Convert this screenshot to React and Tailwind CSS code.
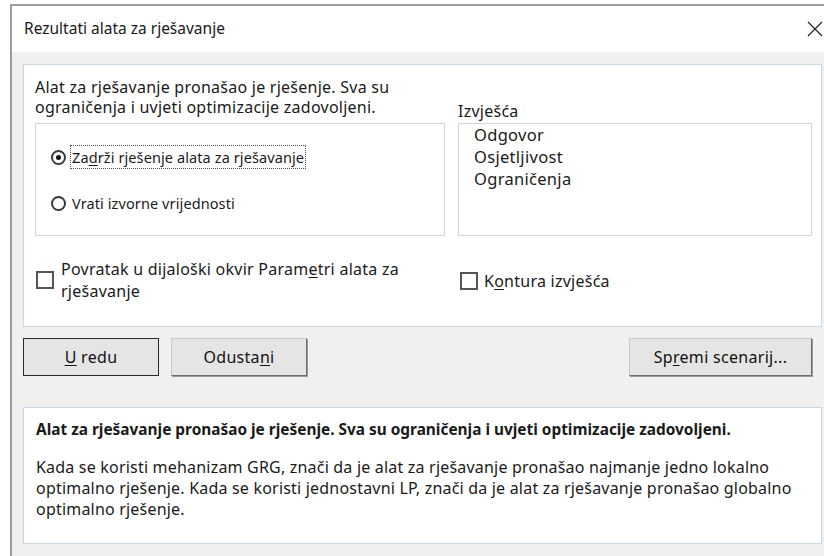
import React, { useState } from "react";

const font = { fontFamily: '"Noto Sans", "Open Sans", sans-serif' };

function Key({ children }) {
  return <span className="underline underline-offset-2 decoration-1">{children}</span>;
}

function Radio({ checked, onClick, children, focused }) {
  return (
    <div className="flex items-center h-[24px] cursor-default" onClick={onClick}>
      <span className="w-[15px] h-[15px] rounded-full border-2 border-[#3a3a3a] bg-white flex items-center justify-center">
        {checked && <span className="w-[5px] h-[5px] rounded-full bg-[#111]" />}
      </span>
      <span
        className={`ml-[5px] px-[1px] text-[14.5px] tracking-[0.1px] leading-[22px] ${
          focused ? "outline outline-1 outline-dotted outline-[#555]" : ""
        }`}
      >
        {children}
      </span>
    </div>
  );
}

function Check({ checked, onClick }) {
  return (
    <span
      onClick={onClick}
      className="w-[18px] h-[18px] shrink-0 border-2 border-[#555] bg-white flex items-center justify-center"
    >
      {checked && <span className="text-[12px] leading-none">✓</span>}
    </span>
  );
}

function Button({ children, primary, className = "" }) {
  return (
    <button
      className={`h-[38px] text-[16px] tracking-[0.3px] text-[#111] bg-[#e5e5e5] ${
        primary
          ? "border-[1.5px] border-[#2a2a2a]"
          : "border border-[#c8c8c8] border-r-[#6e6e6e] border-b-[#6e6e6e] shadow-[1px_1px_0_#9a9a9a]"
      } ${className}`}
    >
      {children}
    </button>
  );
}

export default function App() {
  const [keep, setKeep] = useState(true);
  const [back, setBack] = useState(false);
  const [outline, setOutline] = useState(false);

  return (
    <div className="w-[824px] h-[556px] bg-white overflow-hidden" style={font}>
      <div className="ml-[10px] mt-[4px] h-[560px] border-l-2 border-t-2 border-[#9c9c9c] flex flex-col text-[#1a1a1a]">
        {/* title bar */}
        <div className="h-[46px] bg-white flex items-center justify-between pl-[12px] pr-[1px]">
          <span className="text-[15.5px]">Rezultati alata za rješavanje</span>
          <svg width="16" height="16" viewBox="0 0 16 16">
            <path d="M1 1L15 15M15 1L1 15" stroke="#222" strokeWidth="1.2" fill="none" />
          </svg>
        </div>

        {/* dialog body */}
        <div className="flex-1 bg-[#f0f0f0] pl-[11px] pt-[12px]">
          <div className="w-[799px] h-[263px] bg-white border border-[#cdd7e1] pl-[11px] pt-[12px]">
            <div className="grid grid-cols-[410px_354px] gap-x-[13px] items-end">
              <p className="text-[16px] tracking-[0.25px] leading-[20px] mb-[6px] whitespace-nowrap">
                Alat za rješavanje pronašao je rješenje. Sva su
                <br />
                ograničenja i uvjeti optimizacije zadovoljeni.
              </p>
              <p className="text-[16px] tracking-[0.25px] leading-[20px] mb-[2px]">Izvješća</p>

              <div className="h-[113px] border border-[#cdd7e1] pl-[15px] pt-[21px]">
                <Radio checked={keep} focused onClick={() => setKeep(true)}>
                  Za<Key>d</Key>rži rješenje alata za rješavanje
                </Radio>
                <div className="mt-[22px]">
                  <Radio checked={!keep} onClick={() => setKeep(false)}>
                    Vrati izvorne vri<Key>j</Key>ednosti
                  </Radio>
                </div>
              </div>
              <div className="h-[113px] border border-[#cdd7e1] pl-[15px] text-[16.5px] tracking-[0.3px] leading-[22px]">
                <div>Odgovor</div>
                <div>Osjetljivost</div>
                <div>Ograničenja</div>
              </div>
            </div>

            <div className="grid grid-cols-[410px_354px] gap-x-[13px] mt-[22px]">
              <div className="flex items-center pl-[1px]" onClick={() => setBack(!back)}>
                <Check checked={back} />
                <span className="ml-[7px] text-[16px] tracking-[0.25px] leading-[22px] whitespace-nowrap">
                  Povratak u dijaloški okvir Param<Key>e</Key>tri alata za
                  <br />
                  rješavanje
                </span>
              </div>
              <div className="flex items-center pl-[2px] pt-[2px]" onClick={() => setOutline(!outline)}>
                <Check checked={outline} />
                <span className="ml-[6px] text-[16px] tracking-[0.25px]">
                  K<Key>o</Key>ntura izvješća
                </span>
              </div>
            </div>
          </div>

          {/* action buttons */}
          <div className="flex w-[789px] mt-[11px]">
            <Button primary className="w-[136px]">
              <Key>U</Key> redu
            </Button>
            <Button className="w-[136px] ml-[12px]">
              Odusta<Key>n</Key>i
            </Button>
            <Button className="w-[183px] ml-auto">
              Sp<Key>r</Key>emi scenarij...
            </Button>
          </div>

          {/* message box */}
          <div className="w-[799px] h-[137px] mt-[31px] bg-white border border-[#cdd7e1] pl-[12px] pt-[12px] whitespace-nowrap">
            <p className="font-bold text-[15.4px] leading-[20px]">
              Alat za rješavanje pronašao je rješenje. Sva su ograničenja i uvjeti optimizacije zadovoljeni.
            </p>
            <p className="mt-[17px] text-[16px] tracking-[0.2px] leading-[21px]">
              Kada se koristi mehanizam GRG, znači da je alat za rješavanje pronašao najmanje jedno lokalno
              <br />
              optimalno rješenje. Kada se koristi jednostavni LP, znači da je alat za rješavanje pronašao globalno
              <br />
              optimalno rješenje.
            </p>
          </div>
        </div>
      </div>
    </div>
  );
}
